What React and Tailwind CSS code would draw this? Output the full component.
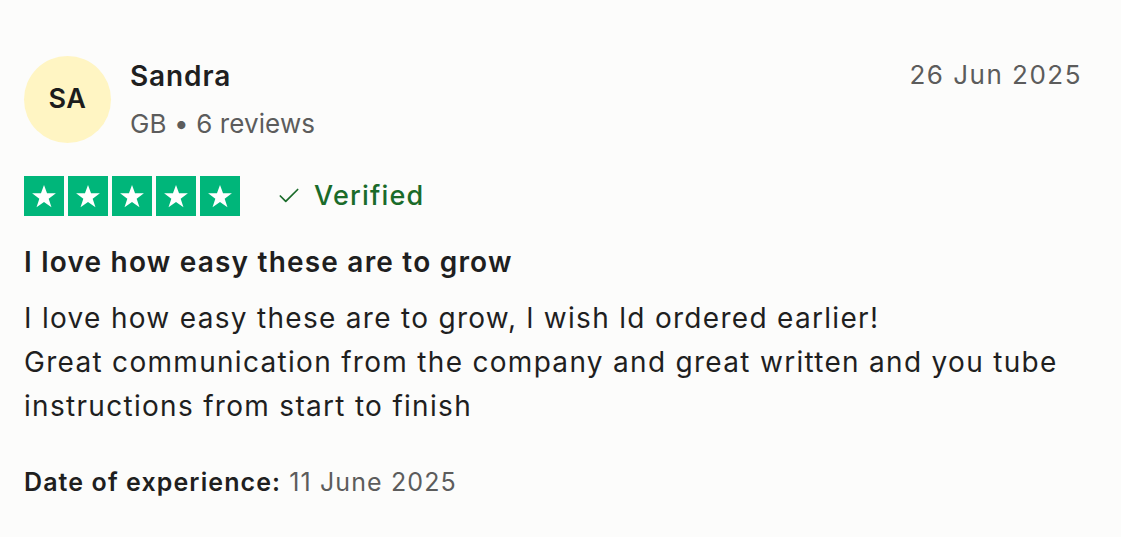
import { Check } from "lucide-react";

const Star = () => (
  <div className="w-[40px] h-[40px] bg-[#00b67a] flex items-center justify-center">
    <svg viewBox="0 0 24 24" className="w-[28px] h-[28px]">
      <path
        d="M12 2.5l2.6 7.2h7.6l-6.2 4.6 2.4 7.3L12 17.1l-6.4 4.5 2.4-7.3L1.8 9.7h7.6z"
        fill="#ffffff"
      />
    </svg>
  </div>
);

const App = () => {
  return (
    <div
      className="w-[1121px] h-[537px] bg-[#fcfcfb] text-[#1f1f1f] px-[24px] pt-[56px]"
      style={{ fontFamily: "Inter, 'Liberation Sans', sans-serif" }}
    >
      {/* header: avatar, name, date */}
      <div className="flex items-start justify-between pr-[15px]">
        <div className="flex items-start gap-[19px]">
          <div className="w-[87px] h-[87px] rounded-full bg-[#fff5c3] flex items-center justify-center text-[27px] font-semibold tracking-[0.5px] text-[#1c1c1c]">
            SA
          </div>
          <div className="flex flex-col gap-[6px]">
            <span className="text-[28px] font-semibold leading-[40px] tracking-[0.9px] text-[#1f1f1f]">Sandra</span>
            <span className="text-[26px] leading-[44px] tracking-[0.1px] text-[#5c5c5c]">GB • 6 reviews</span>
          </div>
        </div>
        <span className="text-[26px] leading-[40px] text-[#5c5c5c] tracking-[1.5px] -mt-[1px]">26 Jun 2025</span>
      </div>

      {/* rating row */}
      <div className="flex items-center mt-[30px]">
        <div className="flex gap-[4px]">
          <Star />
          <Star />
          <Star />
          <Star />
          <Star />
        </div>
        <div className="flex items-center gap-[12px] ml-[36px] text-[#1a6b2a]">
          <Check size={26} strokeWidth={1.6} />
          <span className="text-[27px] font-medium tracking-[1.2px]">Verified</span>
        </div>
      </div>

      {/* review */}
      <h2 className="text-[28px] font-semibold mt-[25px] leading-[40px] tracking-[1.2px]">I love how easy these are to grow</h2>
      <p className="text-[28px] leading-[44px] mt-[14px] tracking-[1.3px] text-[#1f1f1f]">
        I love how easy these are to grow, l wish ld ordered earlier!
        <br />
        Great communication from the company and great written and you tube instructions from start to finish
      </p>

      <p className="text-[25px] mt-[36px] leading-[36px] tracking-[1.1px]">
        <span className="font-semibold">Date of experience:</span>{" "}
        <span className="text-[#5c5c5c]">11 June 2025</span>
      </p>
    </div>
  );
};

export default App;
